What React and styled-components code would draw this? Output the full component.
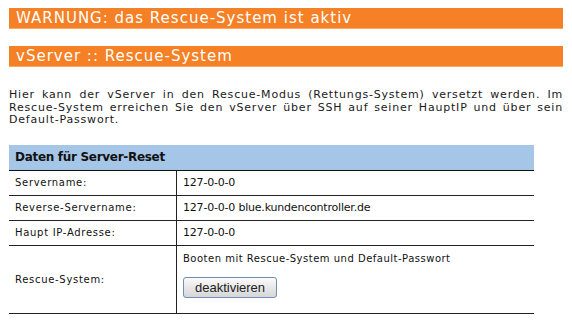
import styled, { createGlobalStyle } from 'styled-components';

const GlobalStyle = createGlobalStyle`
  body {
    margin: 0;
    background: #ffffff;
    font-family: "DejaVu Sans", Verdana, sans-serif;
    color: #000;
  }
`;

const Page = styled.div`
  padding: 8px 9px;
  width: 554px;
`;

const Bar = styled.div`
  background-color: #f58025;
  border-bottom: 1px solid #f9a866;
  color: #ffffff;
  font-size: 15px;
  letter-spacing: 1px;
  line-height: 20px;
  height: 20px;
  padding-left: 7px;
  margin-bottom: ${({ $gap }) => $gap}px;
  white-space: nowrap;
`;

const Intro = styled.p`
  margin: 0 0 18px 0;
  font-size: 11px;
  letter-spacing: 0.8px;
  line-height: 12.5px;
  text-align: justify;
  color: #1a1a1a;
`;

const DataTable = styled.table`
  width: 525px;
  border-collapse: collapse;
`;

const HeadCell = styled.th`
  background-color: #a5c6e7;
  border-bottom: 1px solid #111;
  text-align: left;
  font-size: 12px;
  letter-spacing: -0.3px;
  font-weight: bold;
  height: 25px;
  padding: 0 6px;
  color: #111;
`;

const Row = styled.tr`
  border-bottom: 1px solid #222;
  height: ${({ $tall }) => ($tall ? 68 : 25)}px;
`;

const Label = styled.td`
  width: 155px;
  border-right: 1px solid #222;
  font-size: 10px;
  letter-spacing: 0.7px;
  padding: 0 6px;
  color: #111;
`;

const Value = styled.td`
  font-size: 11px;
  letter-spacing: -0.2px;
  padding: 0 6px;
  color: #111;
`;

const ValueStack = styled.div`
  display: flex;
  flex-direction: column;
  align-items: flex-start;
  gap: 13px;
  padding: 5px 0 12px;
  font-size: 10px;
  letter-spacing: 0.5px;
`;

const Button = styled.button`
  font-family: "Liberation Sans", Arial, sans-serif;
  font-size: 13px;
  letter-spacing: 0;
  height: 21px;
  width: 94px;
  padding: 0;
  border: 1px solid #6f8fb3;
  border-radius: 3px;
  background: linear-gradient(#fbfbfb, #e4e4e4 60%, #d6d6d6);
  color: #222;
`;

const rows = [
  ['Servername:', '127-0-0-0'],
  ['Reverse-Servername:', '127-0-0-0 blue.kundencontroller.de'],
  ['Haupt IP-Adresse:', '127-0-0-0'],
];

export default function App() {
  return (
    <Page>
      <GlobalStyle />
      <Bar $gap={17}>WARNUNG: das Rescue-System ist aktiv</Bar>
      <Bar $gap={22}>vServer :: Rescue-System</Bar>
      <Intro>
        Hier kann der vServer in den Rescue-Modus (Rettungs-System) versetzt werden. Im
        Rescue-System erreichen Sie den vServer über SSH auf seiner HauptIP und über sein
        Default-Passwort.
      </Intro>
      <DataTable>
        <thead>
          <tr>
            <HeadCell colSpan={2}>Daten für Server-Reset</HeadCell>
          </tr>
        </thead>
        <tbody>
          {rows.map(([label, value]) => (
            <Row key={label}>
              <Label>{label}</Label>
              <Value>{value}</Value>
            </Row>
          ))}
          <Row $tall>
            <Label>Rescue-System:</Label>
            <Value>
              <ValueStack>
                Booten mit Rescue-System und Default-Passwort
                <Button>deaktivieren</Button>
              </ValueStack>
            </Value>
          </Row>
        </tbody>
      </DataTable>
    </Page>
  );
}
